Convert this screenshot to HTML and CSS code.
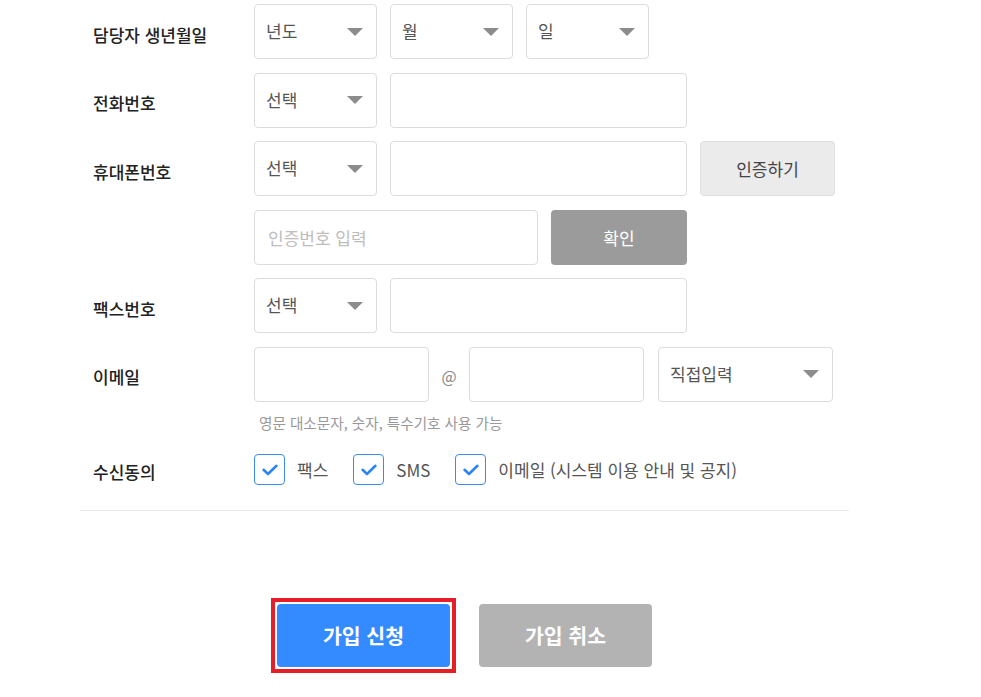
FILE: index.html
```html
<!DOCTYPE html>
<html lang="ko">
<head>
<meta charset="utf-8">
<title>가입 신청</title>
<link rel="stylesheet" href="styles.css">
</head>
<body>
<div class="page">
  <div class="form">
    <div class="row">
      <div class="label">담당자 생년월일</div>
      <div class="fields">
        <div class="select"><span>년도</span><i class="arrow"></i></div>
        <div class="select"><span>월</span><i class="arrow"></i></div>
        <div class="select"><span>일</span><i class="arrow"></i></div>
      </div>
    </div>
    <div class="row">
      <div class="label">전화번호</div>
      <div class="fields">
        <div class="select"><span>선택</span><i class="arrow"></i></div>
        <input class="input wide" type="text">
      </div>
    </div>
    <div class="row">
      <div class="label">휴대폰번호</div>
      <div class="fields">
        <div class="select"><span>선택</span><i class="arrow"></i></div>
        <input class="input wide" type="text">
        <button class="btn btn-light" type="button">인증하기</button>
      </div>
    </div>
    <div class="row">
      <div class="label"></div>
      <div class="fields">
        <input class="input code" type="text" placeholder="인증번호 입력">
        <button class="btn btn-dark" type="button">확인</button>
      </div>
    </div>
    <div class="row">
      <div class="label">팩스번호</div>
      <div class="fields">
        <div class="select"><span>선택</span><i class="arrow"></i></div>
        <input class="input wide" type="text">
      </div>
    </div>
    <div class="row">
      <div class="label">이메일</div>
      <div class="fields email">
        <input class="input mail" type="text">
        <span class="at">@</span>
        <input class="input mail" type="text">
        <div class="select mail-select"><span>직접입력</span><i class="arrow"></i></div>
      </div>
    </div>
    <p class="help">영문 대소문자, 숫자, 특수기호 사용 가능</p>
    <div class="row consent">
      <div class="label">수신동의</div>
      <div class="fields checks">
        <label class="check"><span class="box"><svg viewBox="0 0 16 12" width="16" height="12"><path d="M1.6 5.8 L6 10 L14.4 1.8" fill="none" stroke="#2f84f3" stroke-width="2.6" stroke-linecap="round" stroke-linejoin="round"/></svg></span>팩스</label>
        <label class="check"><span class="box"><svg viewBox="0 0 16 12" width="16" height="12"><path d="M1.6 5.8 L6 10 L14.4 1.8" fill="none" stroke="#2f84f3" stroke-width="2.6" stroke-linecap="round" stroke-linejoin="round"/></svg></span>SMS</label>
        <label class="check"><span class="box"><svg viewBox="0 0 16 12" width="16" height="12"><path d="M1.6 5.8 L6 10 L14.4 1.8" fill="none" stroke="#2f84f3" stroke-width="2.6" stroke-linecap="round" stroke-linejoin="round"/></svg></span>이메일 (시스템 이용 안내 및 공지)</label>
      </div>
    </div>
  </div>
  <div class="actions">
    <span class="focus-ring"><button class="big big-primary" type="button">가입 신청</button></span>
    <button class="big big-cancel" type="button">가입 취소</button>
  </div>
</div>
</body>
</html>
```

FILE: styles.css
```css
* { box-sizing: border-box; }
html, body { margin: 0; padding: 0; background: #fff; }
body {
  font-family: "Noto Sans CJK KR", "Noto Sans", sans-serif;
  color: #222;
}
.page {
  width: 769px;
  margin-left: 80px;
  padding-top: 4px;
}
.form {
  border-bottom: 1px solid #e6e9ee;
  padding-bottom: 25px;
}
.row {
  display: flex;
  align-items: center;
  padding-left: 13px;
  height: 55px;
  margin-bottom: 13.6px;
}
.label {
  width: 161px;
  flex: none;
  font-size: 17px;
  font-weight: 500;
  color: #222;
  padding-top: 5px;
}
.fields {
  display: flex;
  align-items: center;
  gap: 13px;
  height: 100%;
}
.select {
  width: 123px;
  height: 55px;
  border: 1px solid #dcdcdc;
  border-radius: 4px;
  display: flex;
  align-items: center;
  justify-content: space-between;
  padding: 0 13px 0 11px;
  font-size: 17px;
  color: #555;
  background: #fff;
}
.select span { margin-top: -2px; }
.arrow {
  width: 0;
  height: 0;
  border-left: 8px solid transparent;
  border-right: 8px solid transparent;
  border-top: 8px solid #8c8c8c;
}
.input {
  height: 55px;
  border: 1px solid #dcdcdc;
  border-radius: 4px;
  font-family: inherit;
  font-size: 17px;
  padding: 0 13px;
  color: #333;
  background: #fff;
  outline: none;
}
.input.wide { width: 297px; }
.input.code { width: 284px; }
.input::placeholder { color: #bdbdbd; }
.btn {
  height: 55px;
  width: 136px;
  border-radius: 4px;
  font-family: inherit;
  font-size: 17px;
  cursor: pointer;
}
.btn-light {
  background: #ebebeb;
  border: 1px solid #dedede;
  color: #444;
  width: 135px;
}
.btn-dark {
  background: #9b9b9b;
  border: none;
  color: #fff;
}
.fields.email { gap: 0; }
.input.mail { width: 175px; }
.at {
  width: 40px;
  text-align: center;
  font-size: 16px;
  color: #888;
  padding-top: 4px;
}
.select.mail-select {
  width: 175px;
  margin-left: 14px;
}
.help {
  margin: -2.6px 0 0 0;
  padding-left: 179px;
  font-size: 14.6px;
  line-height: 20px;
  color: #999;
}
.row.consent {
  height: 30px;
  margin: 22px 0 0 0;
}
.row.consent .label { padding-top: 4px; }
.checks { gap: 25px; }
.check {
  display: flex;
  align-items: center;
  gap: 12px;
  font-size: 17px;
  color: #555;
}
.box {
  width: 31px;
  height: 31px;
  border: 1.5px solid #3a8bf0;
  border-radius: 4px;
  display: flex;
  align-items: center;
  justify-content: center;
}
.actions {
  display: flex;
  justify-content: center;
  align-items: center;
  gap: 23px;
  margin-top: 87px;
  padding-right: 6px;
}
.focus-ring {
  display: block;
  border: 4px solid #e61e28;
  padding: 2px;
}
.big {
  display: block;
  width: 173px;
  height: 63px;
  border: none;
  border-radius: 4px;
  font-family: inherit;
  font-size: 20.5px;
  font-weight: 700;
  color: #fff;
}
.big-primary { background: #338bff; }
.big-cancel { background: #b3b3b3; }
```
